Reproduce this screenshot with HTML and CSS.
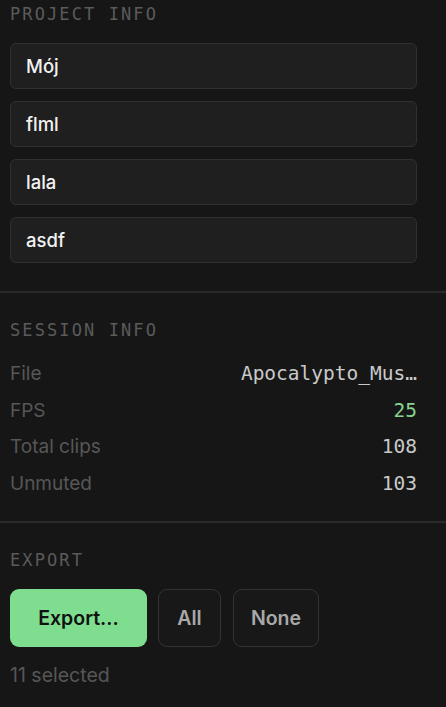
FILE: index.html
```html
<!DOCTYPE html>
<html lang="pl">
<head>
<meta charset="utf-8">
<title>Panel</title>
<link rel="stylesheet" href="styles.css">
</head>
<body>
<aside class="panel">
  <section class="section section-project">
    <h2 class="heading">PROJECT INFO</h2>
    <div class="fields">
      <input class="field" type="text" value="Mój">
      <input class="field" type="text" value="flml">
      <input class="field" type="text" value="lala">
      <input class="field" type="text" value="asdf">
    </div>
  </section>
  <section class="section section-session">
    <h2 class="heading">SESSION INFO</h2>
    <dl class="info">
      <div class="row"><dt>File</dt><dd class="value">Apocalypto_Mus…</dd></div>
      <div class="row"><dt>FPS</dt><dd class="value value-green">25</dd></div>
      <div class="row"><dt>Total clips</dt><dd class="value">108</dd></div>
      <div class="row"><dt>Unmuted</dt><dd class="value">103</dd></div>
    </dl>
  </section>
  <section class="section section-export">
    <h2 class="heading">EXPORT</h2>
    <div class="buttons">
      <button class="btn btn-primary">Export...</button>
      <button class="btn btn-ghost btn-all">All</button>
      <button class="btn btn-ghost btn-none">None</button>
    </div>
    <p class="selected">11 selected</p>
  </section>
</aside>
</body>
</html>
```
FILE: styles.css
```css
* { box-sizing: border-box; }
html, body {
  margin: 0;
  padding: 0;
  background: #161616;
  height: 100%;
}
body {
  font-family: Inter, "Noto Sans", sans-serif;
  overflow: hidden;
}
.panel {
  width: 446px;
}
.section {
  padding: 27px 29px 0 10px;
}
.section + .section {
  border-top: 2px solid #2a2a2a;
}
.section-project {
  padding-top: 4px;
  padding-bottom: 28px;
}
.section-session {
  padding-bottom: 19px;
}
.heading {
  margin: 0;
  font-family: "DejaVu Sans Mono", monospace;
  font-weight: normal;
  font-size: 17px;
  line-height: 20px;
  letter-spacing: 2.1px;
  color: #5b5b5b;
}
.fields {
  margin-top: 19px;
  display: flex;
  flex-direction: column;
  gap: 12px;
}
.field {
  display: block;
  width: 100%;
  height: 46px;
  margin: 0;
  padding: 0 15px;
  background: #1f1f1f;
  border: 1.5px solid #303030;
  border-radius: 6px;
  color: #f2f2f2;
  font-family: Inter, "Noto Sans", sans-serif;
  font-size: 18.5px;
  font-weight: 500;
  outline: none;
}
.info {
  margin: 15px 0 0 0;
  display: grid;
  grid-auto-rows: 36.7px;
}
.row {
  display: flex;
  align-items: center;
  justify-content: space-between;
  gap: 20px;
}
.row dt {
  flex: none;
  font-size: 19px;
  color: #575757;
}
.value {
  margin: 0;
  font-family: "DejaVu Sans Mono", monospace;
  font-size: 19.5px;
  color: #c9c9c9;
  white-space: nowrap;
  text-align: right;
}
.value-green {
  color: #86d490;
}
.buttons {
  margin-top: 19px;
  display: flex;
  gap: 11px;
}
.btn {
  height: 58px;
  margin: 0;
  padding: 0;
  border-radius: 9px;
  font-family: Inter, "Noto Sans", sans-serif;
  font-size: 19.5px;
  font-weight: 600;
  cursor: pointer;
}
.btn-primary {
  width: 137px;
  background: #7edd8f;
  border: none;
  color: #111;
}
.btn-ghost {
  background: #181818;
  border: 1.5px solid #333;
  color: #a8a8a8;
}
.btn-all { width: 63px; }
.btn-none { width: 86px; margin-left: 1px; }
.selected {
  margin: 16px 0 0 0;
  font-size: 19.5px;
  line-height: 24px;
  color: #565656;
}
```
